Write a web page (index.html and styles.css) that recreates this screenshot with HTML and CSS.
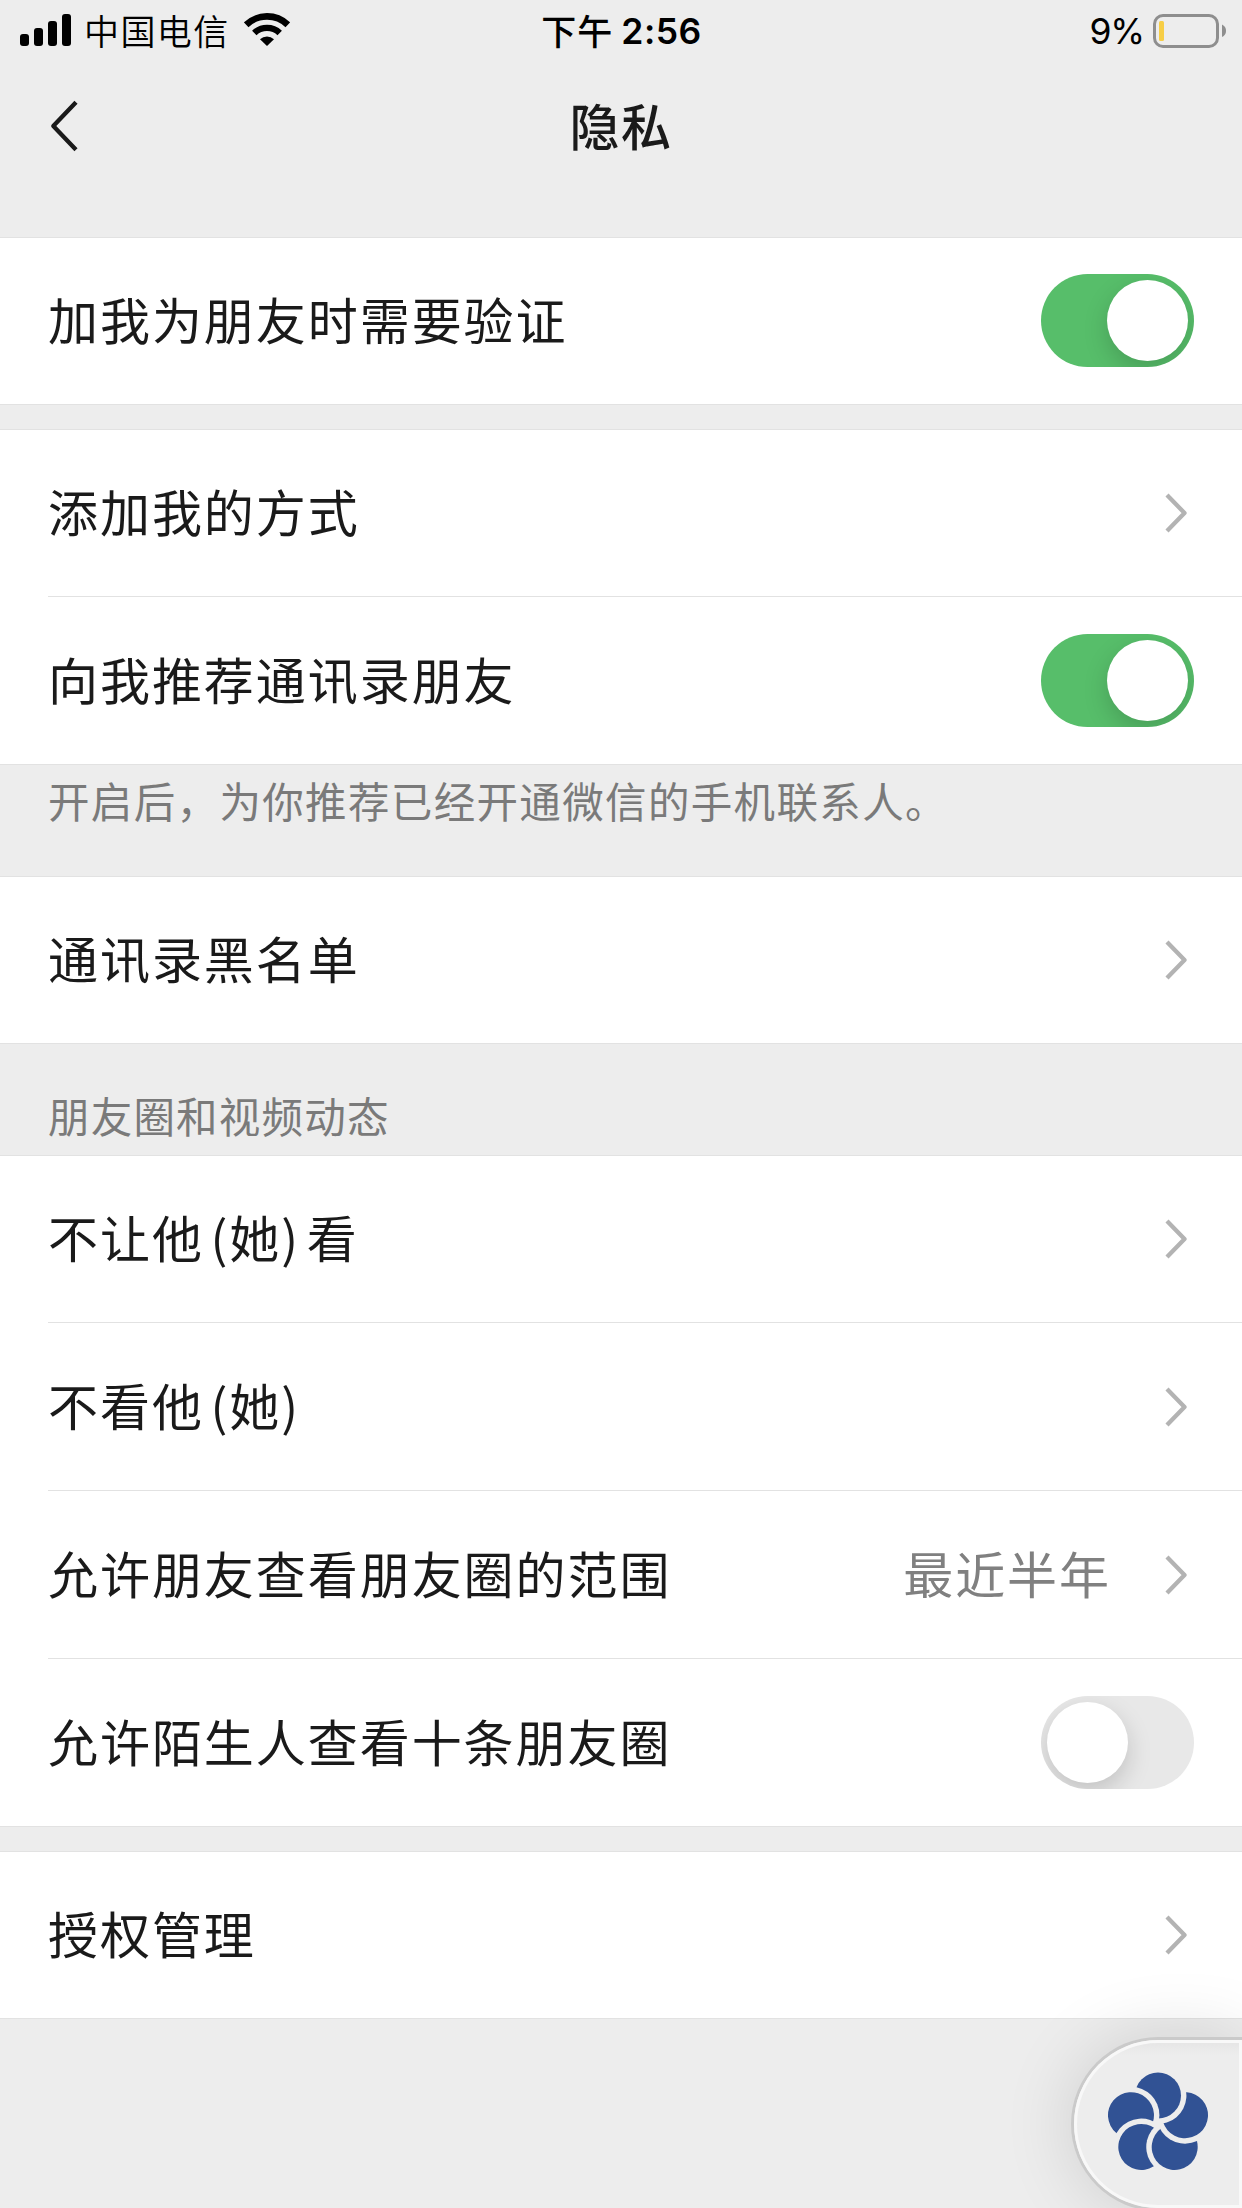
FILE: index.html
```html
<!DOCTYPE html>
<html lang="zh-CN">
<head>
<meta charset="utf-8">
<title>隐私</title>
<link rel="stylesheet" href="styles.css">
</head>
<body>
<header class="status">
  <div class="status-left">
    <svg class="signal" width="51" height="32" viewBox="0 0 51 32"><rect y="20" width="9" height="12" rx="3"/><rect x="14" y="14" width="9" height="18" rx="3"/><rect x="28" y="7" width="9" height="25" rx="3"/><rect x="42" width="9" height="32" rx="3"/></svg>
    <span class="carrier">中国电信</span>
    <svg class="wifi" width="46" height="33" viewBox="0 0 46 33"><path d="M2.2 11.8a30 30 0 0 1 41.6 0" fill="none" stroke="#000" stroke-width="6.6"/><path d="M10.3 20a18.4 18.4 0 0 1 25.4 0" fill="none" stroke="#000" stroke-width="6.4"/><path d="M16 26.2a10.5 10.5 0 0 1 14 0L23 33z"/></svg>
  </div>
  <div class="time"><span class="ampm">下午</span><span class="clock">2:56</span></div>
  <div class="status-right">
    <span class="percent">9%</span>
    <svg width="74" height="34" viewBox="0 0 74 34"><rect x="1.5" y="1.5" width="63" height="31" rx="8.5" fill="none" stroke="#8e8e8e" stroke-width="3"/><rect x="6" y="7" width="5" height="20" rx="1.5" fill="#f7ce46"/><path d="M69 10.500q4 2 4 6.300t-4 6.300z" fill="#8e8e8e"/></svg>
  </div>
</header>
<nav class="nav">
  <svg class="back" width="28" height="52" viewBox="0 0 28 52"><path d="M26 2.200L3.300 26l22.700 23.800" fill="none" stroke="#1a1a1a" stroke-width="4.300" stroke-linejoin="round"/></svg>
  <h1 class="title">隐私</h1>
</nav>
<main>
  <section class="group">
    <div class="row"><span class="label">加我为朋友时需要验证</span><span class="toggle on"><i class="knob"></i></span></div>
  </section>
  <section class="group spaced">
    <div class="row"><span class="label">添加我的方式</span><svg class="chevron" viewBox="0 0 22 40"><path d="M2 2l17.500 18L2 38"/></svg></div>
    <div class="row"><span class="label">向我推荐通讯录朋友</span><span class="toggle on"><i class="knob"></i></span></div>
  </section>
  <p class="note">开启后，为你推荐已经开通微信的手机联系人。</p>
  <section class="group">
    <div class="row"><span class="label">通讯录黑名单</span><svg class="chevron" viewBox="0 0 22 40"><path d="M2 2l17.500 18L2 38"/></svg></div>
  </section>
  <h2 class="heading">朋友圈和视频动态</h2>
  <section class="group">
    <div class="row"><span class="label">不让他 (她) 看</span><svg class="chevron" viewBox="0 0 22 40"><path d="M2 2l17.500 18L2 38"/></svg></div>
    <div class="row"><span class="label">不看他 (她)</span><svg class="chevron" viewBox="0 0 22 40"><path d="M2 2l17.500 18L2 38"/></svg></div>
    <div class="row"><span class="label">允许朋友查看朋友圈的范围</span><span class="value">最近半年</span><svg class="chevron" viewBox="0 0 22 40"><path d="M2 2l17.500 18L2 38"/></svg></div>
    <div class="row"><span class="label">允许陌生人查看十条朋友圈</span><span class="toggle"><i class="knob"></i></span></div>
  </section>
  <section class="group spaced">
    <div class="row"><span class="label">授权管理</span><svg class="chevron" viewBox="0 0 22 40"><path d="M2 2l17.500 18L2 38"/></svg></div>
  </section>
</main>
<aside class="float">
  <svg class="flower" width="104" height="104" viewBox="-52 -52 104 104">
    <defs>
      <mask id="cut" maskUnits="userSpaceOnUse" x="-52" y="-60" width="104" height="104"><rect x="-52" y="-60" width="104" height="104" fill="#fff"/><circle cx="-27" cy="-8.800" r="28.400" fill="#000"/></mask>
      <circle id="petal" cy="-28.400" r="23" mask="url(#cut)"/>
    </defs>
    <g fill="#315294"><use href="#petal"/><use href="#petal" transform="rotate(72)"/><use href="#petal" transform="rotate(144)"/><use href="#petal" transform="rotate(216)"/><use href="#petal" transform="rotate(288)"/></g>
  </svg>
</aside>
</body>
</html>
```
FILE: styles.css
```css
* { box-sizing: border-box; }
body {
  margin: 0;
  width: 1242px;
  height: 2208px;
  position: relative;
  overflow: hidden;
  background: #ededed;
  color: #1a1a1a;
  font-family: "Noto Sans CJK SC", sans-serif;
}
svg { display: block; flex: none; }
.status {
  height: 60px;
  display: grid;
  grid-template-columns: 1fr auto 1fr;
  color: #000;
  line-height: 59px;
}
.status-left, .status-right, .time { display: flex; align-items: flex-start; white-space: nowrap; }
.status-left { padding-left: 20px; }
.signal { margin-top: 14px; }
.carrier { margin-left: 13px; font-size: 35px; letter-spacing: 1.4px; font-weight: 350; }
.wifi { margin: 13px 0 0 14px; }
.time { padding-left: 1px; }
.ampm { font-size: 35px; letter-spacing: 1px; font-weight: 500; }
.clock { margin-left: 8px; font: 600 35.5px/63px Inter, sans-serif; letter-spacing: 0.5px; }
.status-right { justify-content: flex-end; padding-right: 15px; }
.status-right svg { margin: 14px 0 0 9px; }
.percent { font: 400 35.5px/63px Inter, sans-serif; letter-spacing: -1.2px; }
.nav {
  height: 177px;
  display: grid;
  grid-template-columns: 1fr auto 1fr;
  padding-top: 24px;
  align-items: start;
}
.back { margin: 16px 0 0 50px; }
.title { margin: 0; font-size: 50px; line-height: 80px; letter-spacing: 1.6px; font-weight: 500; }
.group { background: #fff; border-top: 1px solid #e2e2e2; }
.spaced { margin-top: 24px; }
.row {
  height: 168px;
  margin-left: 48px;
  padding-right: 48px;
  display: flex;
  align-items: center;
  border-bottom: 1px solid #e2e2e2;
}
.row:first-child { height: 167px; }
.row:last-child { margin-left: 0; padding-left: 48px; }
.label, .value { font-size: 50px; line-height: 80px; padding-bottom: 6px; letter-spacing: 1.95px; word-spacing: -6.5px; white-space: nowrap; }
.label { flex: 1; }
.value { color: #808080; margin-right: 54px; }
.chevron { width: 22px; height: 40px; margin-right: 7px; fill: none; stroke: #b3b3b3; stroke-width: 4.3; stroke-linejoin: round; }
.toggle { width: 153px; height: 93px; border-radius: 47px; padding: 6px; display: flex; overflow: hidden; background: #e8e8e8; }
.row:first-child .toggle { margin-bottom: 1px; }
.toggle.on { background: #57be6a; justify-content: flex-end; }
.knob { width: 81px; height: 81px; border-radius: 50%; background: #fff; box-shadow: 0 9px 24px rgba(0, 0, 0, 0.17); }
.note, .heading { margin: 0; padding-left: 48px; font-size: 41.5px; line-height: 60px; font-weight: 400; letter-spacing: 1.35px; color: #7a7a7a; }
.note { height: 111px; padding-top: 5px; }
.heading { height: 111px; padding-top: 41px; letter-spacing: 1.2px; }
.float {
  position: absolute;
  left: 1074px;
  top: 2040px;
  width: 168px;
  height: 168px;
  border: 3px solid #f8f8f8;
  border-radius: 84px 0 0 84px;
  background: linear-gradient(#e6e6e6, #ededed 12px);
  box-shadow: 0 0 0 3px #cacaca, 0 0 75px rgba(0, 0, 0, 0.14);
  display: flex;
  align-items: center;
  padding-left: 29px;
}
```
